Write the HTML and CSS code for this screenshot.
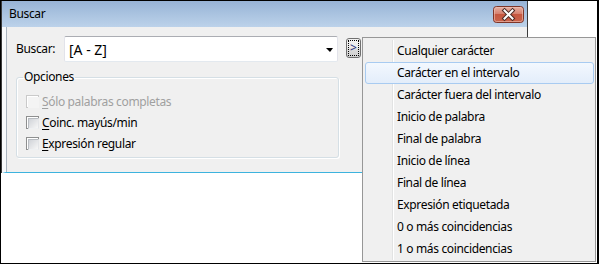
FILE: index.html
```html
<!DOCTYPE html>
<html lang="es">
<head>
<meta charset="utf-8">
<title>Buscar</title>
<link rel="stylesheet" href="styles.css">
</head>
<body>
<div class="shot">
  <div class="window">
    <div class="titlebar">
      <span class="title">Buscar</span>
      <span class="close">
        <svg width="31" height="17" viewBox="0 0 31 17">
          <defs>
            <linearGradient id="cg" x1="0" y1="0" x2="0" y2="1">
              <stop offset="0" stop-color="#e7b3a6"/>
              <stop offset="0.45" stop-color="#d7816f"/>
              <stop offset="0.5" stop-color="#c65740"/>
              <stop offset="1" stop-color="#c9644c"/>
            </linearGradient>
          </defs>
          <rect x="0.5" y="0.5" width="30" height="16" rx="3" fill="url(#cg)" stroke="#7e3528"/>
          <rect x="1.5" y="1.5" width="28" height="14" rx="2" fill="none" stroke="#efc3b8" stroke-opacity="0.6"/>
          <path d="M11.5 4.5 L19.5 12.5 M19.5 4.5 L11.5 12.5" stroke="#4a2a25" stroke-width="4" stroke-linecap="square"/>
          <path d="M11.5 4.5 L19.5 12.5 M19.5 4.5 L11.5 12.5" stroke="#ffffff" stroke-width="2" stroke-linecap="square"/>
        </svg>
      </span>
    </div>
    <div class="body">
      <div class="row">
        <span class="lbl">Buscar:</span>
        <div class="combo">
          <span class="combo-text">[A - Z]</span>
          <span class="arrow"></span>
        </div>
        <div class="more"><span class="focus">&gt;</span></div>
      </div>
      <fieldset class="group">
        <legend>Opciones</legend>
        <div class="check disabled"><span class="box"></span><span class="txt"><u>S</u>ólo palabras completas</span></div>
        <div class="check"><span class="box"></span><span class="txt"><u>C</u>oinc. mayús/min</span></div>
        <div class="check"><span class="box"></span><span class="txt"><u>E</u>xpresión regular</span></div>
      </fieldset>
    </div>
  </div>
  <div class="menu">
    <div class="menu-list">
      <div class="item">Cualquier carácter</div>
      <div class="item hover">Carácter en el intervalo</div>
      <div class="item">Carácter fuera del intervalo</div>
      <div class="item">Inicio de palabra</div>
      <div class="item">Final de palabra</div>
      <div class="item">Inicio de línea</div>
      <div class="item">Final de línea</div>
      <div class="item">Expresión etiquetada</div>
      <div class="item">0 o más coincidencias</div>
      <div class="item">1 o más coincidencias</div>
    </div>
  </div>
</div>
</body>
</html>
```

FILE: styles.css
```css
* { box-sizing: border-box; }
html, body { margin: 0; padding: 0; background: #fff; }
body {
  font-family: "Noto Sans", "Open Sans", sans-serif;
  font-size: 12px;
  letter-spacing: -0.35px;
  color: #000;
}
.shot {
  position: relative;
  width: 599px;
  height: 264px;
  border: 1px solid #000;
  border-right-width: 2px;
  background: #fff;
  overflow: hidden;
}
.window {
  width: 527px;
  border-left: 1px solid #3c3c3c;
  border-right: 1px solid #3c3c3c;
}
.titlebar {
  height: 26px;
  display: flex;
  align-items: flex-start;
  background: linear-gradient(#97b3d6 0%, #a6c0de 40%, #bcd2ea 100%);
}
.title {
  padding-left: 7px;
  padding-top: 5px;
  line-height: 16px;
  color: #000;
}
.close {
  margin-left: auto;
  margin-right: 3px;
  margin-top: 5px;
  height: 17px;
  display: flex;
}
.body {
  background: #f0f0f0;
  border-left: 4px solid #f8fafc;
  border-bottom: 1px solid #3db3de;
  box-shadow: inset 1px 0 0 #aab4bf;
  padding: 9px 0 14px 10px;
}
.row {
  display: flex;
  align-items: flex-start;
}
.lbl {
  width: 48px;
  line-height: 24px;
  padding-top: 1px;
}
.combo {
  width: 274px;
  height: 26px;
  background: #fff;
  border: 1px solid #e2e3ea;
  border-top-color: #abadb3;
  border-bottom-color: #e3e9ef;
  border-radius: 2px;
  display: flex;
  align-items: center;
  padding: 0 4px;
}
.combo-text {
  font-size: 14px;
  letter-spacing: 0;
  line-height: 24px;
  padding-top: 1px;
}
.arrow {
  margin-left: auto;
  width: 0;
  height: 0;
  border-left: 4px solid transparent;
  border-right: 3px solid transparent;
  border-top: 4px solid #000;
  margin-top: 2px;
}
.more {
  margin-left: 8px;
  margin-top: 2px;
  width: 15px;
  height: 20px;
  border: 1px solid #707070;
  border-radius: 3px;
  background: linear-gradient(#f2f2f2, #ebebeb 50%, #dddddd 51%, #cfcfcf);
  padding: 1px;
  display: flex;
}
.focus {
  flex: 1;
  border: 1px dotted #000;
  display: flex;
  align-items: center;
  justify-content: center;
  color: #1b2a78;
  font-size: 12px;
  letter-spacing: 0;
  line-height: 14px;
}
.group {
  margin: 8px 0 0 0;
  width: 323px;
  border: 1px solid #d5dfe5;
  border-radius: 3px;
  box-shadow: 1px 1px 0 #fff, inset 1px 1px 0 #fff;
  padding: 7px 0 3px 9px;
  min-width: 0;
}
.group legend {
  padding: 0 1px;
  margin-left: -3px;
  line-height: 14px;
}
.check {
  height: 21px;
  display: flex;
  align-items: center;
}
.box {
  width: 13px;
  height: 13px;
  border: 1px solid #8e8f8f;
  background: #fff;
  padding: 1px;
  margin-right: 3px;
}
.box::after {
  content: "";
  display: block;
  width: 9px;
  height: 9px;
  background: linear-gradient(135deg, #d0d3d8, #f7f7f7);
  border: 1px solid #c2c5ca;
  border-color: #b8bcc1 #e3e5e8 #eef0f2 #b8bcc1;
}
.check.disabled .txt { color: #a0a0a0; }
.check.disabled .box { border-color: #cacaca; }
.check.disabled .box::after { background: #f4f4f4; border-color: #f4f4f4; }
.txt u { text-decoration-thickness: 1px; text-underline-offset: 2px; }

.menu {
  position: absolute;
  left: 361px;
  top: 36px;
  width: 234px;
  height: 225px;
  border: 1px solid #979797;
  background: #f0f0f0;
  padding: 2px 1px 1px 2px;
}
.menu-list {
  background: linear-gradient(to right, transparent 27px, #e2e3e3 27px, #e2e3e3 28px, #ffffff 28px, #ffffff 29px, transparent 29px);
}
.item {
  height: 22px;
  line-height: 22px;
  padding-left: 32px;
  white-space: nowrap;
}
.item.hover {
  border: 1px solid #a8cbf1;
  border-radius: 3px;
  background: linear-gradient(#f3f8fe, #e3edfa);
  line-height: 20px;
  padding-left: 31px;
}
```
